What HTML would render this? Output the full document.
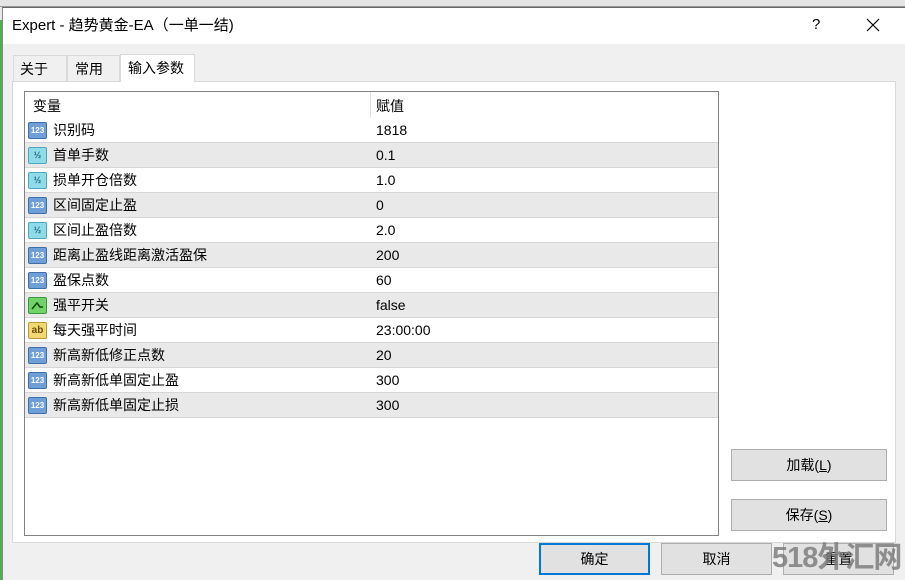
<!DOCTYPE html>
<html><head><meta charset="utf-8"><style>
*{margin:0;padding:0;box-sizing:border-box}
html,body{width:905px;height:580px;overflow:hidden}
body{background:#e9e9e9;font-family:"Liberation Sans","Noto Sans CJK SC",sans-serif;font-size:14px;color:#000;position:relative}
.abs{position:absolute;line-height:18px;white-space:nowrap}
.dlg{left:2px;top:7px;width:903px;height:573px;background:#f0f0f0;border-left:1px solid #888;border-top:1px solid #666}
.title{left:3px;top:8px;width:902px;height:36px;background:#fff}
.tab{top:55px;height:27px;border:1px solid #d9d9d9;border-bottom:none;background:#f0f0f0;padding:4px 6px 0;}
.panel{left:12px;top:81px;width:884px;height:462px;background:#fff;border:1px solid #d9d9d9}
.lv{left:24px;top:91px;width:695px;height:445px;border:1px solid #828282;background:#fff}
.row{position:absolute;left:0;width:693px;height:25px;border-bottom:1px solid #d6d6d6}
.row span{position:absolute;top:3px;line-height:18px;white-space:nowrap}
.n{left:28px}.v{left:351px}
.div{position:absolute;left:345px;top:0;width:1px;height:326px;background:#e0e0e0}
.ic{position:absolute;left:3px;top:4px;width:19px;height:17px;border-radius:2px;font-size:8px;font-weight:bold;text-align:center;line-height:15px}
.btn{height:32px;border:1px solid #adadad;background:#e1e1e1;text-align:center;line-height:30px}
</style></head><body>
<div class="abs" style="left:0;top:0;width:905px;height:7px;background:#e4e4e4;border-bottom:1px solid #999"></div>
<div class="abs" style="left:0;top:20px;width:2px;height:560px;background:#4caf50"></div>
<div class="abs dlg"></div>
<div class="abs title"></div>
<div class="abs" style="left:12px;top:17px;font-size:15px">Expert - 趋势黄金-EA（一单一结)</div>
<div class="abs" style="left:812px;top:16px;font-size:15px">?</div>
<svg class="abs" style="left:866px;top:18px" width="14" height="14"><path d="M1 1L13 13M13 1L1 13" stroke="#000" stroke-width="1.2"/></svg>
<div class="abs tab" style="left:13px;width:54px">关于</div>
<div class="abs tab" style="left:67px;width:53px;padding-left:7px">常用</div>
<div class="abs panel"></div>
<div class="abs tab" style="left:120px;width:75px;top:54px;height:28px;background:#fff;padding-left:7px;padding-top:4px">输入参数</div>
<div class="abs lv">
<div class="row" style="top:0;height:26px;border-bottom:none"><span class="n" style="left:8px;top:5px">变量</span><span class="v" style="top:5px">赋值</span></div>
<div class="div"></div>
<div id="rows"></div>
</div>
<div class="abs btn" style="left:731px;top:449px;width:156px;line-height:30px">加载(<u>L</u>)</div>
<div class="abs btn" style="left:731px;top:499px;width:156px;line-height:30px">保存(<u>S</u>)</div>
<div class="abs btn" style="left:539px;top:543px;width:111px;border:2px solid #0078d7;line-height:28px">确定</div>
<div class="abs btn" style="left:661px;top:543px;width:111px;line-height:30px">取消</div>
<div class="abs btn" style="left:783px;top:543px;width:111px;line-height:30px">重置</div>
<div class="abs" style="left:772px;top:541px;font-size:29px;line-height:34px;font-weight:bold;color:rgba(120,120,120,0.8);letter-spacing:-1px">518外汇网</div>
<script>
var d=[["i","识别码","1818"],["h","首单手数","0.1"],["h","损单开仓倍数","1.0"],["i","区间固定止盈","0"],["h","区间止盈倍数","2.0"],["i","距离止盈线距离激活盈保","200"],["i","盈保点数","60"],["b","强平开关","false"],["s","每天强平时间","23:00:00"],["i","新高新低修正点数","20"],["i","新高新低单固定止盈","300"],["i","新高新低单固定止损","300"]];
var h="";d.forEach(function(r,i){var bg=i%2?"#e9e9e9":"#fff";var ic;
if(r[0]=="i")ic='<div class="ic" style="background:#6f9fd6;color:#fff;border:1px solid #3d6fa8">123</div>';
else if(r[0]=="h")ic='<div class="ic" style="background:#8fdbe8;color:#1a6a80;border:1px solid #4aa7bd;font-size:9px">½</div>';
else if(r[0]=="b")ic='<div class="ic" style="background:#6fd36a;border:1px solid #3a9a3a"><svg width="17" height="15"><path d="M3 11L8 5L11 9L14 9" stroke="#0a4a0a" stroke-width="1.5" fill="none"/></svg></div>';
else ic='<div class="ic" style="background:#f1d873;color:#6a4a00;border:1px solid #b89a30;font-size:10px">ab</div>';
h+='<div class="row" style="top:'+(26+25*i)+'px;background:'+bg+'">'+ic+'<span class="n">'+r[1]+'</span><span class="v">'+r[2]+'</span></div>';});
document.getElementById("rows").innerHTML=h;
</script>
</body></html>
